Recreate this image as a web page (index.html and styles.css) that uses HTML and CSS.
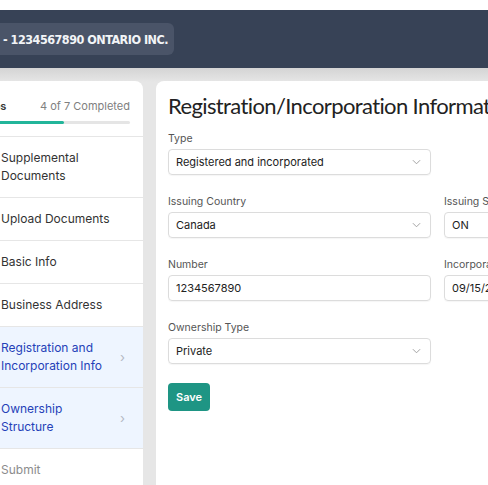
FILE: index.html
```html
<!DOCTYPE html>
<html lang="en">
<head>
    <meta charset="UTF-8">
    <meta name="viewport" content="width=device-width, initial-scale=1.0">
    <title>Registration/Incorporation Information</title>
    <link rel="stylesheet" href="styles.css">
</head>
<body>
    <div class="topbar">
        <div class="company-pill">- 1234567890 ONTARIO INC.</div>
    </div>

    <div class="main">
        <aside class="steps">
            <div class="steps-head">
                <span class="steps-title">Steps</span>
                <span class="steps-count">4 of 7 Completed</span>
            </div>
            <div class="progress"><div class="progress-fill" style="width: 57.14%"></div></div>
            <ul class="step-list">
                <li class="step">Supplemental<br>Documents</li>
                <li class="step">Upload Documents</li>
                <li class="step">Basic Info</li>
                <li class="step">Business Address</li>
                <li class="step active">Registration and<br>Incorporation Info<span class="chev">&#8250;</span></li>
                <li class="step active">Ownership<br>Structure<span class="chev">&#8250;</span></li>
                <li class="step muted">Submit</li>
            </ul>
        </aside>

        <section class="card">
            <h1>Registration/Incorporation Information</h1>
            <form class="form-grid">
                <div class="field">
                    <label>Type</label>
                    <div class="select">Registered and incorporated<svg class="caret" viewBox="0 0 10 6"><path d="M1 1l4 4 4-4"/></svg></div>
                </div>
                <div class="field"></div>

                <div class="field">
                    <label>Issuing Country</label>
                    <div class="select">Canada<svg class="caret" viewBox="0 0 10 6"><path d="M1 1l4 4 4-4"/></svg></div>
                </div>
                <div class="field">
                    <label>Issuing State</label>
                    <div class="select">ON<svg class="caret" viewBox="0 0 10 6"><path d="M1 1l4 4 4-4"/></svg></div>
                </div>

                <div class="field">
                    <label>Number</label>
                    <div class="input">1234567890</div>
                </div>
                <div class="field">
                    <label>Incorporation Date</label>
                    <div class="input">09/15/2015</div>
                </div>

                <div class="field">
                    <label>Ownership Type</label>
                    <div class="select">Private<svg class="caret" viewBox="0 0 10 6"><path d="M1 1l4 4 4-4"/></svg></div>
                </div>
                <div class="field"></div>
            </form>
            <button class="save-btn" type="button">Save</button>
        </section>
    </div>
</body>
</html>
```

FILE: styles.css
```css
body {
    margin: 0;
    font-family: Inter, "Noto Sans", sans-serif;
    background-color: #e6e6e6;
    overflow: hidden;
    width: 488px;
    height: 485px;
    border-top: 10px solid #fff;
}
.topbar {
    height: 58px;
    background-color: #374256;
    display: flex;
    align-items: center;
}
.company-pill {
    margin-left: -14px;
    height: 32px;
    padding: 0 6px 0 17px;
    display: flex;
    align-items: center;
    background-color: #4a5468;
    border-radius: 6px;
    color: #f2f4f7;
    font-family: "DejaVu Sans Condensed", "DejaVu Sans", sans-serif;
    font-weight: bold;
    font-size: 12.5px;
    letter-spacing: -0.5px;
}
.main {
    display: flex;
    align-items: flex-start;
    gap: 13px;
    padding-top: 13px;
    background: linear-gradient(#d4d4d4, #e6e6e6 14px);
    height: 420px;
}
.steps {
    flex: none;
    width: 180px;
    margin-left: -37px;
    background: white;
    border-radius: 8px;
    height: 420px;
}
.steps-head {
    display: flex;
    justify-content: space-between;
    align-items: center;
    padding: 16px 13px 0;
    height: 18px;
    font-size: 11px;
}
.steps-title {
    color: #333;
    font-weight: 600;
}
.steps-count {
    color: #808080;
}
.progress {
    margin: 6px 13px 0;
    height: 3px;
    border-radius: 2px;
    background-color: #e5e5e5;
}
.progress-fill {
    height: 100%;
    border-radius: 2px;
    background-color: #22b59a;
}
.step-list {
    list-style: none;
    margin: 12px 0 0;
    padding: 0;
    border-top: 1px solid #e6e6e6;
}
.step {
    position: relative;
    padding: 12px 18px 12px 38px;
    line-height: 18px;
    font-size: 12px;
    color: #333;
    border-bottom: 1px solid #e6e6e6;
}
.step.active {
    background-color: #eef5ff;
    color: #2541b8;
}
.step.muted {
    color: #8c8c8c;
    border-bottom: none;
}
.chev {
    position: absolute;
    right: 18px;
    top: 50%;
    transform: translateY(-50%);
    color: #b4b8c4;
    font-size: 13px;
}
.card {
    flex: none;
    width: 400px;
    height: 420px;
    background: white;
    border-radius: 8px;
    padding: 11px 12px;
    box-sizing: border-box;
}
h1 {
    margin: 0 0 13px;
    font-family: Lato, sans-serif;
    font-weight: normal;
    font-size: 22px;
    letter-spacing: -0.62px;
    color: #222;
    white-space: nowrap;
}
.form-grid {
    display: grid;
    grid-template-columns: 263px 263px;
    column-gap: 13px;
    row-gap: 20px;
}
.field label {
    display: block;
    font-size: 10.5px;
    color: #555;
    line-height: 14px;
    margin-bottom: 3px;
}
.select,
.input {
    height: 26px;
    box-sizing: border-box;
    border: 1px solid #dcdcdc;
    border-radius: 4px;
    padding: 0 7px;
    display: flex;
    align-items: center;
    justify-content: space-between;
    font-size: 11px;
    color: #222;
    white-space: nowrap;
    box-shadow: 0 1px 1px rgba(0,0,0,0.04);
}
.caret {
    width: 9px;
    height: 6px;
    margin-right: 2px;
    fill: none;
    stroke: #999;
    stroke-width: 1;
}
.save-btn {
    margin-top: 19px;
    height: 28px;
    padding: 0 8px;
    background-color: #1e9584;
    color: white;
    border: none;
    border-radius: 4px;
    font-family: Inter, sans-serif;
    font-weight: 600;
    font-size: 11px;
}
```
